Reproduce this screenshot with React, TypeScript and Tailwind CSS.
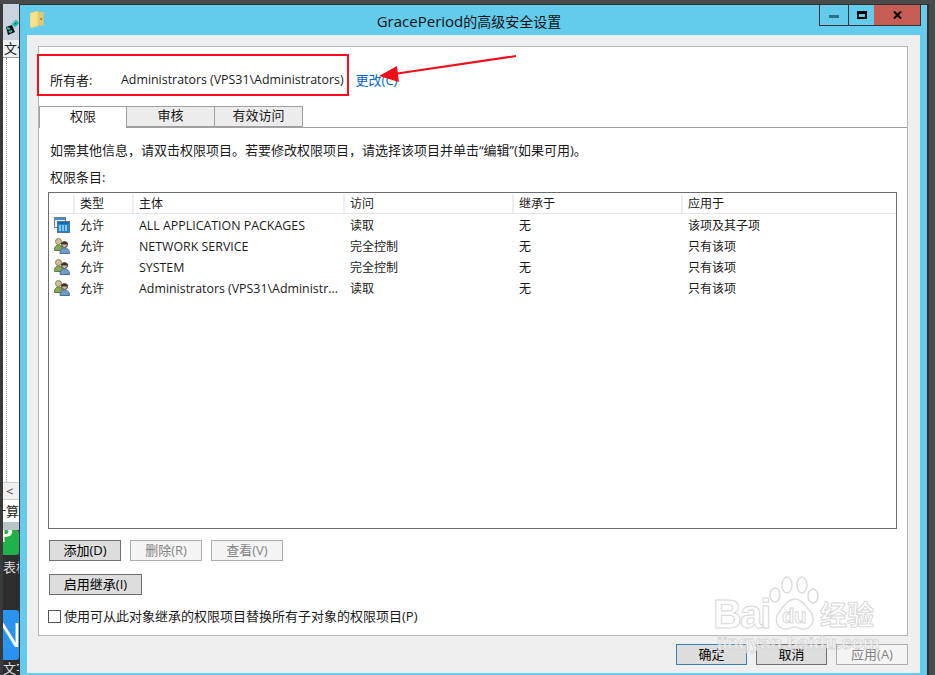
import React from "react";

const rows = [
  { kind: "pkg", name: "ALL APPLICATION PACKAGES", access: "读取", applies: "该项及其子项" },
  { kind: "user", name: "NETWORK SERVICE", access: "完全控制", applies: "只有该项" },
  { kind: "user", name: "SYSTEM", access: "完全控制", applies: "只有该项" },
  { kind: "user", name: "Administrators (VPS31\\Administr...", access: "读取", applies: "只有该项" },
];

function UsersIcon() {
  return (
    <svg width="16" height="16" viewBox="0 0 16 16">
      <circle cx="4.500" cy="3.500" r="3" fill="#d8bd9a" stroke="#7d8a52" />
      <path d="M0.500 12.500c0-4 1.500-5.500 4-5.500s4 1.500 4 5.500z" fill="#8aa85a" stroke="#5f7a3c" />
      <circle cx="10.500" cy="6.500" r="3" fill="#d9b898" stroke="#3f3a35" />
      <path d="M7 5.500c1-2 6-2 7 0l-1 1h-5z" fill="#3a3430" />
      <path d="M6 15.500c0-4 2-5.500 4.500-5.500s5 1.500 5 5.500z" fill="#6f9cc8" stroke="#47709a" />
    </svg>
  );
}

function PackageIcon() {
  return (
    <svg width="16" height="16" viewBox="0 0 16 16">
      <rect x="0.500" y="0.500" width="11" height="10" fill="#eaf1f7" stroke="#6b7f90" />
      <rect x="1" y="1" width="10" height="2" fill="#3f8fd0" />
      <path d="M6 5h4" stroke="#2f7fc8" />
      <rect x="3.500" y="4.500" width="12" height="11" fill="#1d86d6" stroke="#5a7488" />
      <rect x="4" y="5" width="11" height="2" fill="#0f6db8" />
      <path d="M5 9h9M5 11h9M5 13h9" stroke="#ffffff" strokeDasharray="2 1" />
    </svg>
  );
}

function FolderIcon() {
  return (
    <svg width="14" height="17" viewBox="0 0 14 17">
      <path d="M0 2l8-2v15l-8 2z" fill="#f6e08c" />
      <path d="M8 1h5.500v13.500H8z" fill="#e6c868" />
      <path d="M0 2l8-2v15l-8 2z" fill="none" stroke="#e3cb78" strokeWidth="0.700" />
      <rect x="10.500" y="7" width="1.500" height="2" fill="#9a7c30" />
    </svg>
  );
}

function Btn({
  children,
  variant = "normal",
  className = "",
}: {
  children: React.ReactNode;
  variant?: "normal" | "off" | "focus";
  className?: string;
}) {
  const look =
    variant === "off"
      ? "border-[#adadad] bg-[#f4f4f4] text-[#838383]"
      : variant === "focus"
        ? "border-[#3c7fb1] bg-[#dddddd] text-black"
        : "border-[#707070] bg-[#dddddd] text-black";
  return (
    <div className={`flex h-[21px] items-center justify-center border ${look} ${className}`}>
      {children}
    </div>
  );
}

function Tab({ label, active }: { label: string; active?: boolean }) {
  return active ? (
    <div className="z-10 -mb-px flex h-[22px] w-[88px] items-center justify-center border border-b-0 border-[#a0a0a0] bg-white pb-[2px]">
      {label}
    </div>
  ) : (
    <div className="flex h-[21px] w-[88px] items-center justify-center border border-l-0 border-[#a0a0a0] bg-[#ececec] pb-[2px]">
      {label}
    </div>
  );
}

function LeftStrip() {
  return (
    <div className="flex h-[671px] w-5 flex-col overflow-hidden whitespace-nowrap border-l-[3px] border-r border-l-[#3a3a3a] border-r-[#333333] text-[13px] leading-none text-[#222222]">
      <div className="flex h-9 shrink-0 items-center justify-center bg-[#c9d4e0] pt-3">
        <svg width="15" height="18" viewBox="0 0 15 18">
          <path d="M4 16l-2-8 6-2 3 7z" fill="#111111" />
          <path d="M3 9l3 1M5 13l3-1M9 5l3-3 2 2-3 3z" stroke="#22c5b5" strokeWidth="2" />
        </svg>
      </div>
      <div className="flex h-[17px] shrink-0 items-center bg-[#eef1f5] pl-[1px]">文件</div>
      <div className="flex h-[425px] shrink-0 justify-end border-t border-[#999999] bg-white pr-[12px]">
        <div className="h-full border-l border-dotted border-[#999999]" />
      </div>
      <div className="flex h-[18px] shrink-0 items-center border-y border-[#cccccc] bg-[#f0f0f0] pl-[3px] text-[#444444]">&lt;</div>
      <div className="flex h-[22px] shrink-0 items-center justify-end bg-white">计算</div>
      <div className="h-2 shrink-0 bg-[#b9c4ca]" />
      <div className="flex h-[25px] shrink-0 items-start overflow-hidden rounded-r-sm bg-[#21b14c] text-[22px] font-bold leading-none text-white">
        <span className="-mt-2 -ml-1">P</span>
      </div>
      <div className="flex h-[25px] shrink-0 items-center bg-[#2d2d2d] text-[#dddddd]">表格</div>
      <div className="h-[30px] shrink-0 bg-[#2d2d2d]" />
      <div className="flex h-[50px] shrink-0 items-center overflow-hidden rounded-r-sm bg-[#2a93f0] text-[32px] text-white">
        <span className="-ml-[6px]">N</span>
      </div>
      <div className="flex h-[15px] shrink-0 items-end bg-[#2d2d2d] text-[#dddddd]">文字</div>
    </div>
  );
}

export default function App() {
  return (
    <div className="relative flex h-[675px] w-[935px] flex-col overflow-hidden bg-[#4a4a4a] font-['Open_Sans','Noto_Sans_CJK_SC',sans-serif] text-[13px] text-[#1a1a1a]">
      <div className="h-1" />
      <div className="flex min-h-0 flex-1">
        <LeftStrip />
        <div className="flex w-[909px] flex-col border-r-2 border-t border-[#303030] bg-[#63cbec] px-[7px] pb-[2px]">
          {/* title bar */}
          <div className="-mx-[7px] flex h-[30px] shrink-0 items-start">
            <div className="ml-[10px] mt-[6px]">
              <FolderIcon />
            </div>
            <div className="flex-1 pl-[75px] pt-[6px] text-center text-[14px] leading-5 text-[#111111]">
              <span className="text-[15px]">GracePeriod</span>的高级安全设置
            </div>
            <div className="mr-[6px] flex h-[21px] border border-t-0 border-[#333333]">
              <div className="flex w-[28px] items-center justify-center">
                <div className="mt-[2px] h-[3px] w-[10px] bg-[#2f6f88]" />
              </div>
              <div className="flex w-[26px] items-center justify-center border-l border-[#333333]">
                <div className="h-[8px] w-[10px] border-2 border-t-[3px] border-black" />
              </div>
              <div className="flex w-[46px] items-center justify-center bg-[#c75c52]">
                <svg width="9" height="8" viewBox="0 0 9 8">
                  <path d="M1 0.500l7 7M8 0.500l-7 7" stroke="#000000" strokeWidth="2" />
                </svg>
              </div>
            </div>
          </div>

          {/* client area */}
          <div className="flex min-h-0 flex-1 flex-col bg-[#efefef] px-[11px] pr-[12px] pt-[11px]">
            <div className="flex h-[590px] shrink-0 flex-col border border-[#b5b5b5] bg-white">
              <div className="flex h-[59px] shrink-0 items-end pb-[18px] pl-[11px] leading-4">
                <span className="w-[71px]">所有者:</span>
                <span className="text-[12.400px]">Administrators (VPS31\Administrators)</span>
                <span className="ml-[12px] text-[#0066cc]">更改(C)</span>
              </div>
              <div className="flex shrink-0 border-b border-[#a0a0a0]">
                <Tab label="权限" active />
                <Tab label="审核" />
                <Tab label="有效访问" />
              </div>
              <div className="pl-[11px] pt-[14px] leading-4">如需其他信息，请双击权限项目。若要修改权限项目，请选择该项目并单击“编辑”(如果可用)。</div>
              <div className="pl-[11px] pt-[11px] leading-4">权限条目:</div>

              <div className="ml-[9px] mt-[7px] h-[337px] w-[849px] shrink-0 border border-[#6d6d6d] text-xs">
                <div className="flex h-[21px] border-b border-[#e5e5e5] bg-white pt-[1px]">
                  <div className="w-[26px] border-r-2 border-[#eeeeee]" />
                  <div className="w-[59px] border-r-2 border-[#eeeeee] pl-[5px] leading-5">类型</div>
                  <div className="w-[211px] border-r-2 border-[#eeeeee] pl-[5px] leading-5">主体</div>
                  <div className="w-[169px] border-r-2 border-[#eeeeee] pl-[5px] leading-5">访问</div>
                  <div className="w-[169px] border-r-2 border-[#eeeeee] pl-[5px] leading-5">继承于</div>
                  <div className="flex-1 pl-[5px] leading-5">应用于</div>
                </div>
                {rows.map((r) => (
                  <div key={r.name} className="flex h-[21px] items-center pt-[2px]">
                    <div className="-mt-[2px] flex w-[26px] justify-center">
                      {r.kind === "pkg" ? <PackageIcon /> : <UsersIcon />}
                    </div>
                    <div className="w-[59px] pl-[5px]">允许</div>
                    <div className="w-[211px] pl-[5px] pt-[2px] text-[12.400px]">{r.name}</div>
                    <div className="w-[169px] pl-[5px]">{r.access}</div>
                    <div className="w-[169px] pl-[5px]">无</div>
                    <div className="flex-1 pl-[5px]">{r.applies}</div>
                  </div>
                ))}
              </div>

              <div className="ml-[10px] mt-[11px] flex gap-[9px]">
                <Btn className="w-[72px]">添加(D)</Btn>
                <Btn variant="off" className="w-[72px]">删除(R)</Btn>
                <Btn variant="off" className="w-[72px]">查看(V)</Btn>
              </div>
              <div className="ml-[10px] mt-[13px]">
                <Btn className="w-[93px]">启用继承(I)</Btn>
              </div>
              <div className="ml-[9px] mt-[13px] flex items-center gap-[3px] leading-4">
                <div className="h-[13px] w-[13px] border border-[#555555] bg-white" />
                <span>使用可从此对象继承的权限项目替换所有子对象的权限项目(P)</span>
              </div>
            </div>

            <div className="mt-[8px] flex justify-end gap-[9px]">
              <Btn variant="focus" className="w-[71px]">确定</Btn>
              <Btn className="w-[71px]">取消</Btn>
              <Btn variant="off" className="w-[72px]">应用(A)</Btn>
            </div>
          </div>
        </div>
      </div>

      {/* screenshot annotations */}
      <div className="absolute left-[37px] top-[54px] h-[42px] w-[312px] border-2 border-[#fb0d1b]" />
      <svg className="absolute left-[370px] top-[50px]" width="150" height="36" viewBox="0 0 150 36">
        <path d="M146 6L24 24" stroke="#f00d1a" strokeWidth="2" />
        <path d="M9 26L27 16l2 16z" fill="#f00d1a" />
      </svg>

      {/* watermark */}
      <svg className="absolute left-[767px] top-[575px]" width="54" height="58" viewBox="0 0 54 58" fill="#ffffff" fillOpacity="0.6" stroke="#dcdcdc" strokeWidth="1.500">
        <ellipse cx="8" cy="20" rx="5" ry="7" />
        <ellipse cx="20" cy="10" rx="5" ry="8" />
        <ellipse cx="35" cy="10" rx="5" ry="8" />
        <ellipse cx="46" cy="21" rx="5" ry="7" />
        <path d="M28 24c7 0 10 7 15 12 6 7 3 18-7 18-4 0-5-2-8-2s-5 2-9 2c-10 0-12-10-7-17 5-6 9-13 16-13z" />
      </svg>
      <div className="absolute left-[713px] top-[590px] font-['Liberation_Sans',sans-serif] text-[40px] font-bold leading-[48px] tracking-[-2px] text-white/60 [-webkit-text-stroke:1px_#d8d8d8]">Bai</div>
      <div className="absolute left-[782px] top-[604px] font-['Liberation_Sans',sans-serif] text-[20px] font-bold leading-6 text-white/60 [-webkit-text-stroke:1px_#d8d8d8]">du</div>
      <div className="absolute left-[820px] top-[596px] font-['Noto_Sans_CJK_SC',sans-serif] text-[27px] font-bold leading-9 text-white/60 [-webkit-text-stroke:1px_#d8d8d8]">经验</div>
      <div className="absolute left-[717px] top-[631px] font-['Liberation_Sans',sans-serif] text-[18.500px] font-bold leading-6 text-white/50 [-webkit-text-stroke:1px_#d8d8d8]">
        jingyan.baidu.com
      </div>
    </div>
  );
}
